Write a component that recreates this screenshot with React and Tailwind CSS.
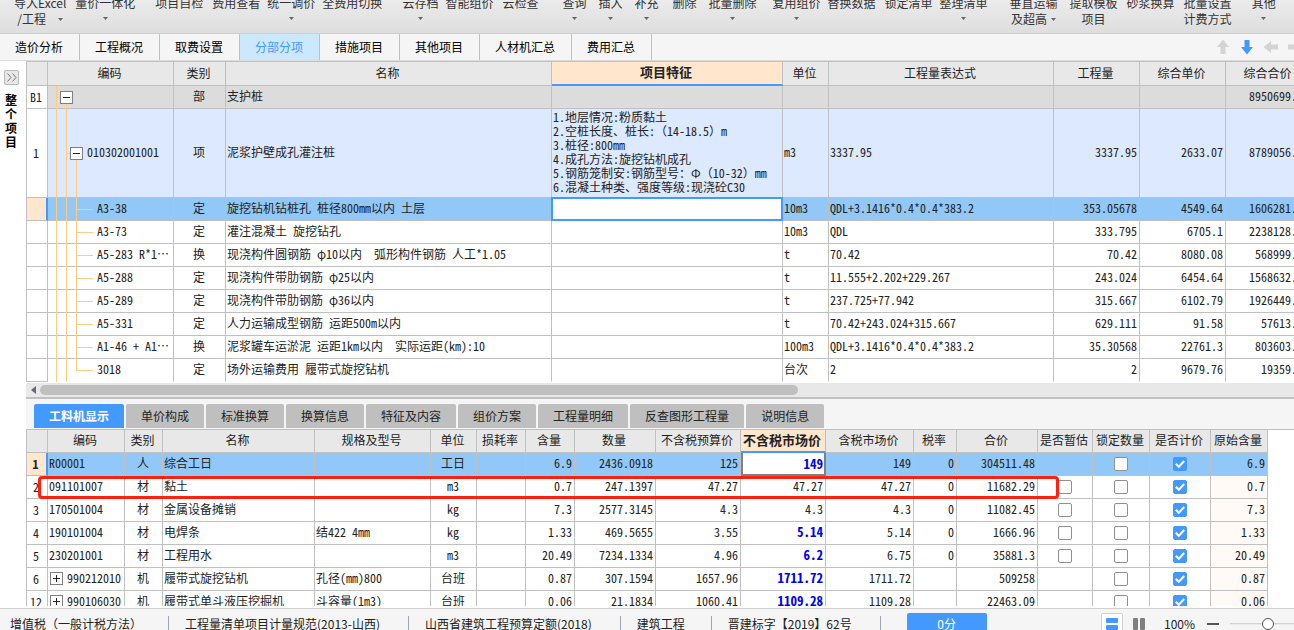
import React, { useState } from "react";
import clsx from "clsx";

const toolbar = [
  { lines: ["导入Excel", "/工程"], arrow: "ml-3", gap: "ml-[14px]" },
  { lines: ["量价一体化"], arrow: true, gap: "ml-[9px]" },
  { lines: ["项目自检"], gap: "ml-5" },
  { lines: ["费用查看"], gap: "ml-[9px]" },
  { lines: ["统一调价"], arrow: true, gap: "ml-[7px]" },
  { lines: ["全费用切换"], gap: "ml-[7px]" },
  { lines: ["云存档"], arrow: true, gap: "ml-5" },
  { lines: ["智能组价"], gap: "ml-[7px]" },
  { lines: ["云检查"], gap: "ml-[9px]" },
  { lines: ["查询"], arrow: true, gap: "ml-6" },
  { lines: ["插入"], arrow: true, gap: "ml-3" },
  { lines: ["补充"], arrow: true, gap: "ml-3" },
  { lines: ["删除"], gap: "ml-[14px]" },
  { lines: ["批量删除"], arrow: true, gap: "ml-3" },
  { lines: ["复用组价"], arrow: true, gap: "ml-4" },
  { lines: ["替换数据"], gap: "ml-[7px]" },
  { lines: ["锁定清单"], gap: "ml-[9px]" },
  { lines: ["整理清单"], arrow: true, gap: "ml-[7px]" },
  { lines: ["垂直运输", "及超高"], arrow: "ml-1", gap: "ml-[22px]" },
  { lines: ["提取模板", "项目"], gap: "ml-3" },
  { lines: ["砂浆换算"], gap: "ml-[9px]" },
  { lines: ["批量设置", "计费方式"], gap: "ml-[9px]" },
  { lines: ["其他"], arrow: true, gap: "ml-5" },
];

const sheets = ["造价分析", "工程概况", "取费设置", "分部分项", "措施项目", "其他项目", "人材机汇总", "费用汇总"];

const feature = [
  "1.地层情况:粉质黏土",
  "2.空桩长度、桩长:（14-18.5）m",
  "3.桩径:800mm",
  "4.成孔方法:旋挖钻机成孔",
  "5.钢筋笼制安:钢筋型号：Φ（10-32）mm",
  "6.混凝土种类、强度等级:现浇砼C30",
];

const items = [
  { no: "B1", level: 0, code: "", kind: "部", name: "支护桩", unit: "", expr: "", qty: "", price: "", total: "8950699.03" },
  { no: "1", level: 1, code: "010302001001", kind: "项", name: "泥浆护壁成孔灌注桩", unit: "m3", expr: "3337.95", qty: "3337.95", price: "2633.07", total: "8789056.01" },
  { no: "", level: 2, code: "A3-38", kind: "定", name: "旋挖钻机钻桩孔 桩径800mm以内 土层", unit: "10m3", expr: "QDL+3.1416*0.4*0.4*383.2", qty: "353.05678", price: "4549.64", total: "1606281.25" },
  { no: "", level: 2, code: "A3-73", kind: "定", name: "灌注混凝土 旋挖钻孔", unit: "10m3", expr: "QDL", qty: "333.795", price: "6705.1", total: "2238128.85" },
  { no: "", level: 2, code: "A5-283 R*1⋯", kind: "换", name: "现浇构件圆钢筋 φ10以内  弧形构件钢筋 人工*1.05", unit: "t", expr: "70.42", qty: "70.42", price: "8080.08", total: "568999.23" },
  { no: "", level: 2, code: "A5-288", kind: "定", name: "现浇构件带肋钢筋 φ25以内", unit: "t", expr: "11.555+2.202+229.267", qty: "243.024", price: "6454.64", total: "1568632.43" },
  { no: "", level: 2, code: "A5-289", kind: "定", name: "现浇构件带肋钢筋 φ36以内", unit: "t", expr: "237.725+77.942", qty: "315.667", price: "6102.79", total: "1926449.41" },
  { no: "", level: 2, code: "A5-331", kind: "定", name: "人力运输成型钢筋 运距500m以内", unit: "t", expr: "70.42+243.024+315.667", qty: "629.111", price: "91.58", total: "57613.99" },
  { no: "", level: 2, code: "A1-46 + A1⋯", kind: "换", name: "泥浆罐车运淤泥 运距1km以内  实际运距(km):10", unit: "100m3", expr: "QDL+3.1416*0.4*0.4*383.2", qty: "35.30568", price: "22761.3", total: "803603.17" },
  { no: "", level: 2, code: "3018", kind: "定", name: "场外运输费用 履带式旋挖钻机", unit: "台次", expr: "2", qty: "2", price: "9679.76", total: "19359.52" },
];

const detailTabs = ["工料机显示", "单价构成", "标准换算", "换算信息", "特征及内容", "组价方案", "工程量明细", "反查图形工程量", "说明信息"];

const detailCols = ["", "编码", "类别", "名称", "规格及型号", "单位", "损耗率", "含量", "数量", "不含税预算价", "不含税市场价", "含税市场价", "税率", "合价", "是否暂估", "锁定数量", "是否计价", "原始含量"];

// est: whether the row offers the 是否暂估 tick box
const resources = [
  { no: "1", code: "R00001", kind: "人", name: "综合工日", spec: "", unit: "工日", amount: "6.9", qty: "2436.0918", budget: "125", market: "149", taxed: "149", rate: "0", total: "304511.48", changed: true },
  { no: "2", code: "091101007", kind: "材", name: "黏土", spec: "", unit: "m3", amount: "0.7", qty: "247.1397", budget: "47.27", market: "47.27", taxed: "47.27", rate: "0", total: "11682.29", est: true },
  { no: "3", code: "170501004", kind: "材", name: "金属设备摊销", spec: "", unit: "kg", amount: "7.3", qty: "2577.3145", budget: "4.3", market: "4.3", taxed: "4.3", rate: "0", total: "11082.45", est: true },
  { no: "4", code: "190101004", kind: "材", name: "电焊条", spec: "结422 4mm", unit: "kg", amount: "1.33", qty: "469.5655", budget: "3.55", market: "5.14", taxed: "5.14", rate: "0", total: "1666.96", changed: true, est: true },
  { no: "5", code: "230201001", kind: "材", name: "工程用水", spec: "", unit: "m3", amount: "20.49", qty: "7234.1334", budget: "4.96", market: "6.2", taxed: "6.75", rate: "0", total: "35881.3", changed: true, est: true },
  { no: "6", code: "990212010", kind: "机", name: "履带式旋挖钻机", spec: "孔径(mm)800", unit: "台班", amount: "0.87", qty: "307.1594", budget: "1657.96", market: "1711.72", taxed: "1711.72", rate: "", total: "509258", changed: true, group: true },
  { no: "12", code: "990106030", kind: "机", name: "履带式单斗液压挖掘机", spec: "斗容量(1m3)", unit: "台班", amount: "0.06", qty: "21.1834", budget: "1060.41", market: "1109.28", taxed: "1109.28", rate: "", total: "22463.09", changed: true, group: true },
];

const statusItems = ["增值税（一般计税方法）", "工程量清单项目计量规范(2013-山西)", "山西省建筑工程预算定额(2018)", "建筑工程", "晋建标字【2019】62号"];

const th = "h-[23px] border-r border-b border-[#c0c0c0] pt-0 pr-[2px] pb-[2px] pl-0 text-center font-normal whitespace-nowrap";
const thActive = "h-[23px] border-r border-b-2 border-r-[#c0c0c0] border-b-[#4499ff] bg-[#ffe6cc] pt-0 pr-[2px] pb-[2px] pl-0 text-center text-[13px] font-bold whitespace-nowrap";
const td = "h-[23px] border-r border-b border-[#c0c0c0] pt-0 pr-[2px] pb-[2px] pl-px whitespace-pre overflow-hidden";
const tdCheck = "h-[23px] border-r border-b border-[#c0c0c0] p-0";

function Caret({ className }) {
  return (
    <svg width="5" height="3" viewBox="0 0 5 3" className={className} aria-hidden="true">
      <path d="M0 0h5L2.5 3z" fill="#666" />
    </svg>
  );
}

function Arrow({ turn, color }) {
  return (
    <svg width="16" height="16" viewBox="0 0 16 16" className={clsx("block", turn)} aria-hidden="true">
      <path d="M8 0.5 14 8h-3.5v7h-5V8H2z" fill={color} />
    </svg>
  );
}

function Toggle({ plus }) {
  return (
    <button aria-label={plus ? "展开" : "折叠"} className="block h-[13px] w-[13px] shrink-0 border border-[#808080] bg-white">
      <svg width="11" height="11" viewBox="0 0 11 11" className="block" aria-hidden="true">
        <path d={plus ? "M2 5.5h7M5.5 2v7" : "M2 5.5h7"} stroke="#222" />
      </svg>
    </button>
  );
}

function TreeNode() {
  return (
    <span className="flex w-[13px] flex-col items-center">
      <span className="flex-1" />
      <Toggle />
      <span className="w-px flex-1 bg-[#ffcc80]" />
    </span>
  );
}

function TreeCell({ level, code, last }) {
  return (
    <div className={clsx("relative -mb-px flex pl-2", level === 1 ? "h-[89px]" : "h-[23px]")}>
      <span className="w-px bg-[#ffcc80]" />
      {level > 0 && <span className="ml-[9px] w-px bg-[#ffcc80]" />}
      {level > 1 && <span className={clsx("ml-[9px] w-px bg-[#ffcc80]", last && "mb-[11px]")} />}
      <span className={clsx("h-px self-center bg-[#ffcc80]", level > 1 ? "w-4" : "w-[3px]")} />
      {level < 2 && <TreeNode />}
      <span className="ml-1 self-center pb-[3px]">{code}</span>
    </div>
  );
}

function Check({ label, checked = false }) {
  const [on, setOn] = useState(checked);
  return (
    <label className="relative mx-auto block h-[14px] w-[14px]">
      <input
        type="checkbox"
        aria-label={label}
        checked={on}
        onChange={(e) => setOn(e.target.checked)}
        className="block h-[14px] w-[14px] appearance-none rounded-xs border border-[#909090] bg-white checked:border-[#4499ff] checked:bg-[#4499ff]"
      />
      {on && (
        <svg width="14" height="14" viewBox="0 0 14 14" className="pointer-events-none absolute inset-0" aria-hidden="true">
          <path d="M2.8 6.8 5.8 9.8 11.2 4" fill="none" stroke="#fff" strokeWidth="2" />
        </svg>
      )}
    </label>
  );
}

function Toolbar() {
  return (
    <div className="flex h-[34px] shrink-0 overflow-hidden border-b border-[#cfcfcf] bg-linear-to-b from-[#ebebeb] to-[#dedede] text-[#333]">
      {toolbar.map((t) => (
        <button key={t.lines[0]} className={clsx("-mt-[5px] flex h-9 shrink-0 flex-col items-center leading-4 whitespace-nowrap", t.gap)}>
          <span>{t.lines[0]}</span>
          {t.lines[1] ? (
            <span className="flex items-center">
              {t.lines[1]}
              {t.arrow && <Caret className={t.arrow} />}
            </span>
          ) : (
            t.arrow && <Caret className="mt-[6px]" />
          )}
        </button>
      ))}
    </div>
  );
}

function SheetTabs() {
  const [active, setActive] = useState("分部分项");
  return (
    <div className="flex h-[27px] shrink-0 overflow-hidden border-b border-[#dcdcdc] bg-[#f5f5f5]">
      {sheets.map((s) => (
        <button
          key={s}
          onClick={() => setActive(s)}
          className={clsx("border-r border-[#c0c0c0] pr-4 pl-[15px]", s === active ? "bg-[#cce8ff] text-[#4499ff]" : "text-black")}
        >
          {s}
        </button>
      ))}
      <div className="-mr-[9px] ml-auto flex items-center gap-2">
        <button aria-label="上移"><Arrow color="#d4d4d4" /></button>
        <button aria-label="下移"><Arrow turn="rotate-180" color="#4499ff" /></button>
        <button aria-label="升级"><Arrow turn="-rotate-90" color="#d4d4d4" /></button>
        <button aria-label="降级"><Arrow turn="rotate-90" color="#d4d4d4" /></button>
      </div>
    </div>
  );
}

function ItemTable() {
  return (
    <div className="overflow-hidden">
      <table className="w-[calc(100%+18px)] table-fixed border-separate border-spacing-0 border-t border-l border-[#c0c0c0]">
        <colgroup>
          <col className="w-[21px]" />
          <col className="w-[126px]" />
          <col className="w-[52px]" />
          <col />
          <col className="w-[231px]" />
          <col className="w-[46px]" />
          <col className="w-[225px]" />
          <col className="w-[86px]" />
          <col className="w-[86px]" />
          <col className="w-[86px]" />
        </colgroup>
        <thead>
          <tr className="h-6 bg-[#e8e8e8]">
            <th className={th} />
            <th className={th}>编码</th>
            <th className={th}>类别</th>
            <th className={th}>名称</th>
            <th className={thActive}>项目特征</th>
            <th className={th}>单位</th>
            <th className={th}>工程量表达式</th>
            <th className={th}>工程量</th>
            <th className={th}>综合单价</th>
            <th className={th}>综合合价</th>
          </tr>
        </thead>
        <tbody>
          {items.map((r, i) => {
            const current = r.code === "A3-38";
            const last = i === items.length - 1;
            const cell = clsx(td, last && "border-b-transparent");
            return (
              <tr
                key={i}
                className={clsx(r.level === 0 && "bg-[#dcdcdc]", r.level === 1 && "bg-[#dce9fe]", current && "bg-[#91c8f7]", r.level === 2 && !current && "bg-white")}
              >
                <td className={clsx("border-b border-b-[#c0c0c0] pt-0 pr-[2px] pb-px pl-0 text-center", current ? "border-r-2 border-r-[#4499ff] bg-[#ffe6cc]" : "border-r border-r-[#c0c0c0] bg-white")}>{r.no}</td>
                <td className={clsx("border-r border-b border-[#c0c0c0] p-0 whitespace-pre", last && "border-b-transparent")}>
                  <TreeCell level={r.level} code={r.code} last={last} />
                </td>
                <td className={clsx(cell, "text-center")}>{r.kind}</td>
                <td className={cell}>{r.name}</td>
                {current ? (
                  <td className="border-r border-b border-[#c0c0c0] p-0">
                    <input aria-label="项目特征" className="relative block h-[22px] w-full bg-white px-[2px] outline-2 -outline-offset-1 outline-[#4499ff]" />
                  </td>
                ) : (
                  <td className={clsx(cell, "leading-[14px]")}>
                    {r.level === 1 && feature.map((f) => <div key={f}>{f}</div>)}
                  </td>
                )}
                <td className={cell}>{r.unit}</td>
                <td className={cell}>{r.expr}</td>
                <td className={clsx(cell, "text-right")}>{r.qty}</td>
                <td className={clsx(cell, "text-right")}>{r.price}</td>
                <td className={clsx(cell, "text-right")}>{r.total}</td>
              </tr>
            );
          })}
        </tbody>
      </table>
    </div>
  );
}

function DetailTable() {
  return (
    <div className="relative mb-[2px] min-h-0 flex-1 overflow-hidden border-t border-[#c0c0c0] bg-white">
      <table className="w-[calc(100%-26px)] table-fixed border-separate border-spacing-0 border-l border-[#c0c0c0]">
        <colgroup>
          <col className="w-[21px]" />
          <col className="w-[77px]" />
          <col className="w-[38px]" />
          <col />
          <col className="w-[116px]" />
          <col className="w-[46px]" />
          <col className="w-[49px]" />
          <col className="w-[49px]" />
          <col className="w-[81px]" />
          <col className="w-[85px]" />
          <col className="w-[85px]" />
          <col className="w-[88px]" />
          <col className="w-[43px]" />
          <col className="w-[81px]" />
          <col className="w-[55px]" />
          <col className="w-[57px]" />
          <col className="w-[61px]" />
          <col className="w-[57px]" />
        </colgroup>
        <thead>
          <tr className="bg-[#e8e8e8]">
            {detailCols.map((c) => (
              <th key={c} className={c === "不含税市场价" ? thActive : th}>{c}</th>
            ))}
          </tr>
        </thead>
        <tbody>
          {resources.map((r, i) => (
            <tr key={r.no} className={i === 0 ? "bg-[#91c8f7]" : "bg-white"}>
              <td className={clsx("border-b border-b-[#c0c0c0] pt-0 pr-[2px] pb-0 pl-0 text-center", i === 0 ? "border-r-2 border-r-[#4499ff] bg-[#ffe6cc] font-bold" : "border-r border-r-[#c0c0c0]")}>{r.no}</td>
              <td className={td}>
                {r.group ? (
                  <span className="flex items-center gap-1 pl-px">
                    <Toggle plus />
                    {r.code}
                  </span>
                ) : (
                  r.code
                )}
              </td>
              <td className={clsx(td, "text-center")}>{r.kind}</td>
              <td className={td}>{r.name}</td>
              <td className={td}>{r.spec}</td>
              <td className={clsx(td, "text-center")}>{r.unit}</td>
              <td className={td} />
              <td className={clsx(td, "text-right")}>{r.amount}</td>
              <td className={clsx(td, "text-right")}>{r.qty}</td>
              <td className={clsx(td, "text-right")}>{r.budget}</td>
              {i === 0 ? (
                <td className="h-[23px] border-2 border-t-0 border-[#808080] bg-white px-px py-0 text-right text-[13px] font-bold text-[#0000f0]">{r.market}</td>
              ) : (
                <td className={clsx(td, "text-right", r.changed && "text-[13px] font-bold text-[#0000f0]")}>{r.market}</td>
              )}
              <td className={clsx(td, "text-right")}>{r.taxed}</td>
              <td className={clsx(td, "text-right")}>{r.rate}</td>
              <td className={clsx(td, "text-right")}>{r.total}</td>
              <td className={tdCheck}>{r.est && <Check label={"是否暂估 " + r.code} />}</td>
              <td className={tdCheck}><Check label={"锁定数量 " + r.code} /></td>
              <td className={tdCheck}><Check label={"是否计价 " + r.code} checked /></td>
              <td className={clsx(td, "text-right", i > 0 && "bg-[#fffaf5]")}>{r.amount}</td>
            </tr>
          ))}
        </tbody>
      </table>
      {/* marker round the second row */}
      <div className="pointer-events-none absolute top-[46px] right-[235px] left-3 h-[23px] rounded-sm border-3 border-[#ff2010]" />
    </div>
  );
}

function DetailTabs() {
  const [active, setActive] = useState("工料机显示");
  return (
    <div className="flex shrink-0 gap-[2px] bg-[#f5f5f5] pt-[5px] pb-px pl-2">
      {detailTabs.map((t) => (
        <button
          key={t}
          onClick={() => setActive(t)}
          className={clsx("h-6 rounded-t-xs px-[15px]", t === active ? "bg-[#4499ff] font-bold text-white" : "bg-[#bfbfbf] text-[#222]")}
        >
          {t}
        </button>
      ))}
    </div>
  );
}

function StatusBar() {
  const [zoom, setZoom] = useState(50);
  return (
    <div className="h-[22px] shrink-0 overflow-hidden border-t border-[#d0d0d0] bg-[#f5f5f5] text-[#222]">
      <div className="flex h-[30px] items-center whitespace-nowrap">
        {statusItems.map((s, i) => (
          <div key={s} className={clsx("flex h-4 items-center border-r border-[#a0a4b0]", i === 0 ? "pl-[10px]" : "pl-4", /\d/.test(s) ? "pr-7" : "pr-[26px]")}>{s}</div>
        ))}
        <button className="ml-[26px] h-[22px] w-20 rounded-xs bg-[#4499ff] text-white">0分</button>
        <div className="ml-auto flex items-center">
          <button aria-label="上下布局" className="flex h-[22px] w-[22px] items-center justify-center rounded-xs border border-[#d0d0d0] bg-white">
            <svg width="12" height="12" viewBox="0 0 12 12" aria-hidden="true">
              <rect width="12" height="5" rx="1" fill="#4499ff" />
              <rect y="7" width="12" height="5" rx="1" fill="#4499ff" />
            </svg>
          </button>
          <button aria-label="左右布局" className="ml-[10px]">
            <svg width="12" height="12" viewBox="0 0 12 12" className="block" aria-hidden="true">
              <rect width="5" height="12" rx="1" fill="#808080" />
              <rect x="7" width="5" height="12" rx="1" fill="#808080" />
            </svg>
          </button>
          <span className="ml-[19px] w-8 text-[12px]">100%</span>
          <button aria-label="缩小" className="ml-[11px] h-[2px] w-3 bg-[#555]" />
          <input
            type="range"
            aria-label="缩放"
            value={zoom}
            onChange={(e) => setZoom(e.target.value)}
            className="-mr-3 ml-[11px] h-3 w-[76px] appearance-none bg-linear-to-b from-transparent from-42% via-[#c8c8c8] via-42% to-transparent to-58% [&::-webkit-slider-thumb]:h-3 [&::-webkit-slider-thumb]:w-3 [&::-webkit-slider-thumb]:appearance-none [&::-webkit-slider-thumb]:rounded-full [&::-webkit-slider-thumb]:border [&::-webkit-slider-thumb]:border-[#555] [&::-webkit-slider-thumb]:bg-white"
          />
        </div>
      </div>
    </div>
  );
}

export default function App() {
  return (
    <div lang="zh-CN" className="flex h-screen flex-col overflow-hidden bg-white font-[family-name:'Noto_Sans_CJK_SC',sans-serif] text-[12px] leading-4 text-[#222]">
      <Toolbar />
      <SheetTabs />
      <div className="flex min-h-0 flex-1">
        <aside className="flex w-[26px] shrink-0 flex-col items-center pt-[9px] pr-1">
          <button aria-label="展开" className="flex h-[15px] w-[15px] items-center justify-center rounded-xs border border-[#b8b8b8] bg-[#e8e8e8]">
            <svg width="11" height="9" viewBox="0 0 11 9" aria-hidden="true">
              <path d="M1.5 0.5 5 4.5 1.5 8.5M6.5 0.5 10 4.5 6.5 8.5" fill="none" stroke="#777" />
            </svg>
          </button>
          <div className="mt-2 w-3 text-center text-[12px] leading-[14px] font-bold text-black">整个项目</div>
        </aside>
        <main className="flex min-w-0 flex-1 flex-col font-[family-name:'Noto_Sans_Mono_CJK_SC','Noto_Sans_CJK_SC',monospace]">
          <ItemTable />
          <div className="mt-px flex h-[14px] shrink-0 items-center gap-1 bg-[#e8e8e8] pl-[5px]">
            <svg width="5" height="8" viewBox="0 0 5 8" aria-hidden="true">
              <path d="M5 0v8L0 4z" fill="#666b75" />
            </svg>
            <div className="h-[10px] w-3/5 rounded-full bg-[#bfbfbf]" />
          </div>
          <div className="h-[2px] shrink-0 bg-[#c0c0c0]" />
          <DetailTabs />
          <DetailTable />
        </main>
      </div>
      <StatusBar />
    </div>
  );
}
